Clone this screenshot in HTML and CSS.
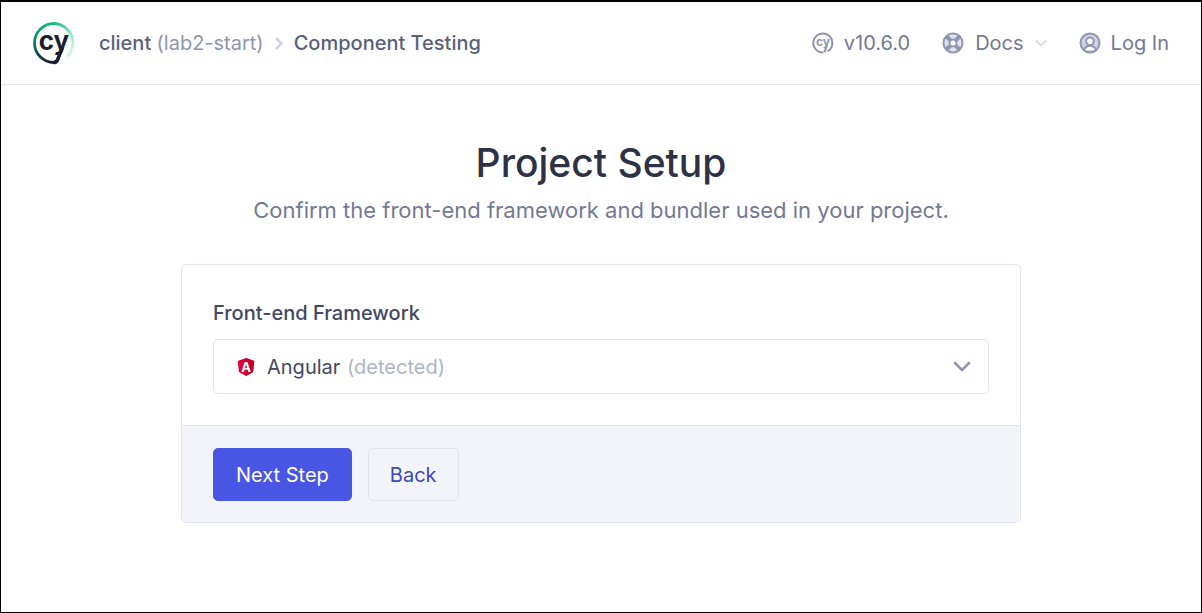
FILE: index.html
```html
<!DOCTYPE html>
<html lang="en">
<head>
<meta charset="utf-8">
<meta name="viewport" content="width=device-width, initial-scale=1">
<title>Project Setup</title>
<link rel="stylesheet" href="styles.css">
</head>
<body class="page">
<header class="topbar">
  <svg class="logo" viewBox="0 0 42 42" role="img" aria-label="Cypress">
    <defs>
      <linearGradient id="ringLeft" x1="0" y1="0" x2="0" y2="1">
        <stop offset="0" stop-color="#16b87f"/>
        <stop offset=".5" stop-color="#0b8361"/>
        <stop offset="1" stop-color="#1b1e2e"/>
      </linearGradient>
      <linearGradient id="ringRight" x1="0" y1="0" x2="1" y2="1">
        <stop offset="0" stop-color="#16b87f"/>
        <stop offset=".6" stop-color="#8ee8c3"/>
        <stop offset="1" stop-color="#e6fbf3"/>
      </linearGradient>
    </defs>
    <g fill="none" stroke-width="2.8">
      <path d="M20.500 1.500A19.500 19.500 0 0 1 34.500 34.500" stroke="url(#ringRight)"/>
      <path d="M21 1.500A19.500 19.500 0 0 0 21 40.500" stroke="url(#ringLeft)"/>
      <path d="M29.500 25L24.500 38Q23.500 40.500 20.500 40.500" stroke="#1b1e2e" stroke-width="3.500"/>
    </g>
    <text class="logo-text" x="21" y="28" text-anchor="middle">cy</text>
  </svg>
  <nav class="crumbs" aria-label="Breadcrumb">
    <a class="crumb" href="#">client <span class="branch">(lab2-start)</span></a>
    <svg class="crumb-arrow" viewBox="0 0 10 14" aria-hidden="true"><path d="M2 2l5.500 5.500L2 13"/></svg>
    <span class="crumb">Component Testing</span>
  </nav>
  <div class="actions">
    <a class="action" href="#">
      <svg class="icon" viewBox="0 0 22 22" aria-hidden="true">
        <path class="line" d="M11.500 20.500A9.500 9.500 0 1 1 15.500 19.300"/>
        <path class="line" d="M15 13.500L12.500 20.400"/>
        <text class="icon-text" x="11" y="14" text-anchor="middle">cy</text>
      </svg>
      v10.6.0
    </a>
    <button class="action docs" type="button">
      <svg class="icon" viewBox="0 0 22 22" aria-hidden="true">
        <circle class="wheel" cx="11" cy="11" r="7"/>
        <path class="spoke" d="M4.500 4.500l4 4M13.500 13.500l4 4M17.500 4.500l-4 4M8.500 13.500l-4 4"/>
        <circle class="line hub" cx="11" cy="11" r="3.600"/>
        <circle class="line" cx="11" cy="11" r="9.500"/>
      </svg>
      Docs
      <svg class="docs-arrow" viewBox="0 0 12 8" aria-hidden="true"><path d="M1 1.500l5 5 5-5"/></svg>
    </button>
    <button class="action login" type="button">
      <svg class="icon" viewBox="0 0 22 22" aria-hidden="true">
        <circle class="line tint" cx="11" cy="11" r="9.500"/>
        <path class="line face" d="M5 18Q6.500 13.800 11 13.800T17 18"/>
        <circle class="line face" cx="11" cy="9.300" r="3.800"/>
      </svg>
      Log In
    </button>
  </div>
</header>
<main class="main">
  <h1 class="title">Project Setup</h1>
  <p class="subtitle">Confirm the front-end framework and bundler used in your project.</p>
  <form class="card">
    <div class="card-body">
      <label class="label" for="framework">Front-end Framework</label>
      <div class="picker">
        <select class="select" id="framework" aria-describedby="detected">
          <option>Angular</option>
        </select>
        <svg class="angular" viewBox="0 0 18 18" aria-hidden="true">
          <path d="M9 0l8.300 2.900L16 14 9 18 2 14 .700 2.900z" fill="#dd0031"/>
          <path d="M9 0l8.300 2.900L16 14 9 18z" fill="#c3002f"/>
          <text class="angular-text" x="9" y="13.500" text-anchor="middle">A</text>
        </svg>
        <span class="detected" id="detected">(detected)</span>
        <svg class="picker-arrow" viewBox="0 0 18 11" aria-hidden="true"><path d="M2 2l7 7 7-7"/></svg>
      </div>
    </div>
    <div class="card-footer">
      <button class="button primary" type="submit">Next Step</button>
      <button class="button secondary" type="button">Back</button>
    </div>
  </form>
</main>
</body>
</html>
```
FILE: styles.css
```css
* {
  box-sizing: border-box;
}

.page {
  margin: 0;
  min-height: 100vh;
  border: 1px solid #000;
  border-top-width: 2px;
  background: #fff;
  font-family: Inter, "Liberation Sans", sans-serif;
  font-size: 20px;
  line-height: 28px;
  color: #5a5f7a;
}

button,
select {
  font: inherit;
}

.topbar {
  display: flex;
  align-items: center;
  padding: 20px 32px;
  border-bottom: 1px solid #e1e3ed;
}

.logo {
  width: 42px;
  height: 42px;
  overflow: visible;
}

.logo-text {
  font-size: 26px;
  font-weight: 700;
  fill: #1b1e2e;
}

.crumbs {
  display: flex;
  align-items: center;
  gap: 10px;
  margin-left: 24px;
  white-space: nowrap;
}

.crumb {
  color: #5a5f7a;
  font-weight: 500;
  text-decoration: none;
}

.branch {
  color: #9095ad;
  font-weight: 400;
}

.crumb-arrow {
  width: 10px;
  height: 14px;
  fill: none;
  stroke: #d0d2e0;
  stroke-width: 2.5;
}

.actions {
  display: flex;
  align-items: center;
  gap: 32px;
  margin-left: auto;
}

.action {
  display: flex;
  align-items: center;
  gap: 10px;
  padding: 0;
  border: 0;
  background: none;
  color: #747994;
  text-decoration: none;
  white-space: nowrap;
}

.docs {
  gap: 11px;
}

.icon {
  width: 22px;
  height: 22px;
}

.line {
  fill: none;
  stroke: #9095b2;
  stroke-width: 2;
}

.icon-text {
  font-size: 12px;
  font-weight: 700;
  fill: #9095b2;
}

.wheel {
  fill: none;
  stroke: #e1e3ed;
  stroke-width: 4;
}

.spoke {
  fill: none;
  stroke: #9095b2;
  stroke-width: 4;
}

.hub {
  fill: #fff;
}

.tint {
  fill: #d0d2e0;
}

.face {
  fill: #fff;
}

.docs-arrow {
  width: 12px;
  height: 8px;
  fill: none;
  stroke: #d0d2e0;
  stroke-width: 1.5;
}

.main {
  padding: 52px 24px 0;
  text-align: center;
}

.title {
  margin: 0;
  color: #2e3247;
  font-size: 39px;
  font-weight: 500;
  line-height: 52px;
}

.subtitle {
  margin: 5px 0 0;
  color: #747994;
  font-size: 22px;
  line-height: 32px;
}

.card {
  max-width: 840px;
  margin: 38px auto 0;
  overflow: hidden;
  border: 1px solid #e1e3ed;
  border-radius: 5px;
  text-align: left;
}

.card-body {
  padding: 34px 31px 31px;
}

.label {
  display: block;
  margin-bottom: 12px;
  color: #434861;
  font-weight: 500;
}

.picker {
  position: relative;
}

.select {
  display: block;
  width: 100%;
  height: 55px;
  padding: 0 53px;
  appearance: none;
  border: 1px solid #e1e3ed;
  border-radius: 5px;
  background: #fff;
  color: #434861;
}

.angular,
.detected,
.picker-arrow {
  position: absolute;
  top: 0;
  bottom: 0;
  margin: auto 0;
  pointer-events: none;
}

.angular {
  left: 24px;
  width: 18px;
  height: 18px;
}

.angular-text {
  font-size: 13px;
  font-weight: 700;
  fill: #fff;
}

.detected {
  left: 134px;
  height: 28px;
  color: #afb3c7;
}

.picker-arrow {
  right: 18px;
  width: 18px;
  height: 11px;
  fill: none;
  stroke: #9095ad;
  stroke-width: 2.5;
  stroke-linecap: round;
}

.card-footer {
  display: flex;
  gap: 16px;
  padding: 22px 31px 21px;
  border-top: 1px solid #e1e3ed;
  background: #f3f4fa;
}

.button {
  height: 53px;
  padding: 0 21px;
  border: 1px solid #e1e3ed;
  border-radius: 5px;
}

.primary {
  padding: 0 22px;
  border-color: #4956e3;
  background: #4956e3;
  color: #fff;
}

.secondary {
  background: #f3f4fa;
  color: #3f48b5;
}
```
